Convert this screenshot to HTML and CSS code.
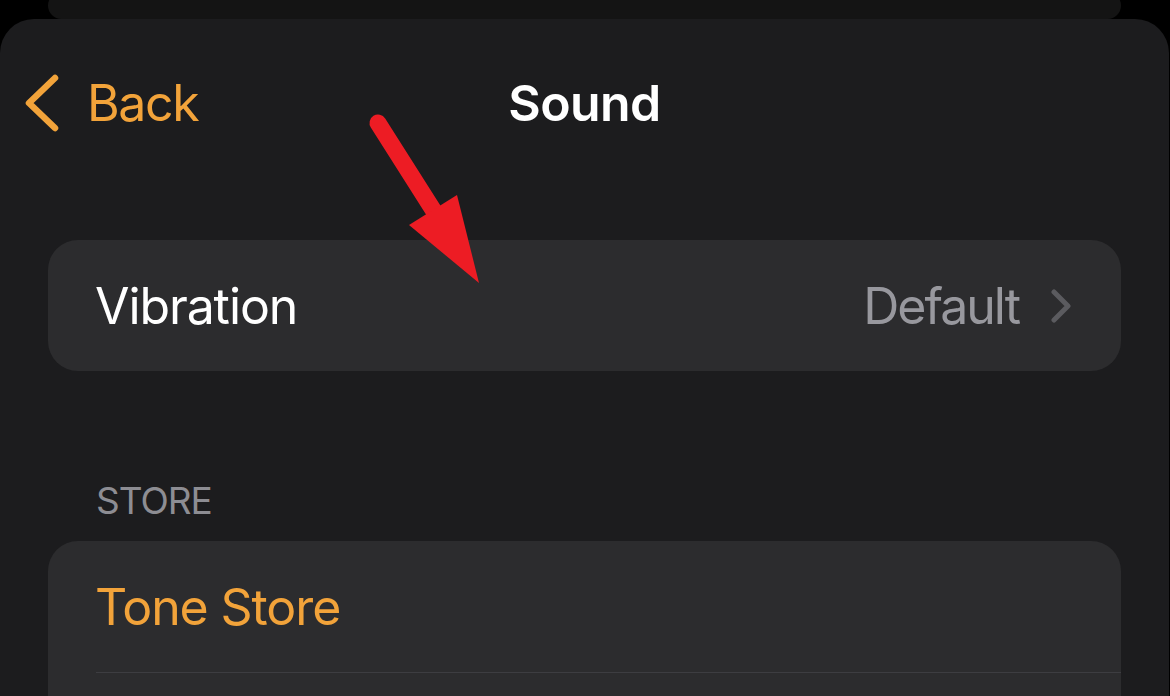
FILE: index.html
```html
<!DOCTYPE html>
<html>
<head>
<meta charset="utf-8">
<link rel="stylesheet" href="styles.css">
</head>
<body>
<div class="back-sheet"></div>
<div class="sheet">
  <div class="nav">
    <div class="back">
      <svg class="back-chevron" width="36" height="60" viewBox="0 0 36 60">
        <polyline points="30,5 4,30 30,55" fill="none" stroke="#f2a33a" stroke-width="6.5" stroke-linecap="round" stroke-linejoin="round"/>
      </svg>
      <span class="back-label">Back</span>
    </div>
    <div class="title">Sound</div>
    <div></div>
  </div>

  <div class="group first">
    <div class="row">
      <span class="label">Vibration</span>
      <span class="detail">
        <span class="value">Default</span>
        <svg class="chev" width="22" height="34" viewBox="0 0 22 34">
          <polyline points="4,3 18,17 4,31" fill="none" stroke="#5b5b5f" stroke-width="5" stroke-linecap="round" stroke-linejoin="round"/>
        </svg>
      </span>
    </div>
  </div>

  <div class="section-header">STORE</div>
  <div class="group">
    <div class="row">
      <span class="label accent">Tone Store</span>
    </div>
    <div class="separator"></div>
    <div class="row"></div>
  </div>
</div>

<svg class="annotation" width="1170" height="696" viewBox="0 0 1170 696">
  <line x1="378" y1="123" x2="437" y2="216" stroke="#ed1c24" stroke-width="17" stroke-linecap="round"/>
  <polygon points="409,225 457,195 479,283" fill="#ed1c24"/>
</svg>
</body>
</html>
```

FILE: styles.css
```css
html, body {
  margin: 0;
  padding: 0;
}
body {
  background: #000;
  width: 1170px;
  height: 696px;
  overflow: hidden;
  position: relative;
  font-family: Inter, "Liberation Sans", sans-serif;
  color: #fff;
}
.back-sheet {
  margin: -8px 49px 0 48px;
  height: 27px;
  background: #141414;
  border-radius: 20px;
}
.sheet {
  background: #1c1c1e;
  border-radius: 34px 34px 0 0;
  height: 677px;
  overflow: hidden;
  margin-right: 1px;
}
.nav {
  display: grid;
  grid-template-columns: 1fr auto 1fr;
  align-items: center;
  height: 60px;
  margin-top: 54px;
}
.back {
  display: flex;
  align-items: center;
  padding-left: 25px;
  color: #f2a33a;
}
.back-chevron {
  display: block;
  margin-top: -1px;
}
.back-label {
  font-size: 50px;
  margin-left: 26px;
  letter-spacing: -1.4px;
}
.title {
  font-size: 50px;
  font-weight: 600;
  letter-spacing: -0.6px;
}
.group {
  margin: 0 48px 0 48px;
  background: #2c2c2e;
  border-radius: 30px;
}
.group.first {
  margin-top: 107px;
}
.row {
  height: 131px;
  display: flex;
  align-items: center;
  justify-content: space-between;
  padding: 0 49px 0 47px;
}
.label {
  font-size: 50px;
  letter-spacing: -1.1px;
}
.accent {
  color: #f2a33a;
}
.detail {
  display: flex;
  align-items: center;
  gap: 31px;
}
.value {
  font-size: 50px;
  color: #98989e;
  letter-spacing: -2px;
}
.chev {
  display: block;
}
.section-header {
  margin: 108px 0 18px 96px;
  font-size: 37px;
  line-height: 44px;
  color: #8d8d93;
  letter-spacing: -1px;
}
.separator {
  height: 1px;
  margin-left: 48px;
  background: #3d3d41;
}
.annotation {
  position: absolute;
  left: 0;
  top: 0;
  pointer-events: none;
}
```
